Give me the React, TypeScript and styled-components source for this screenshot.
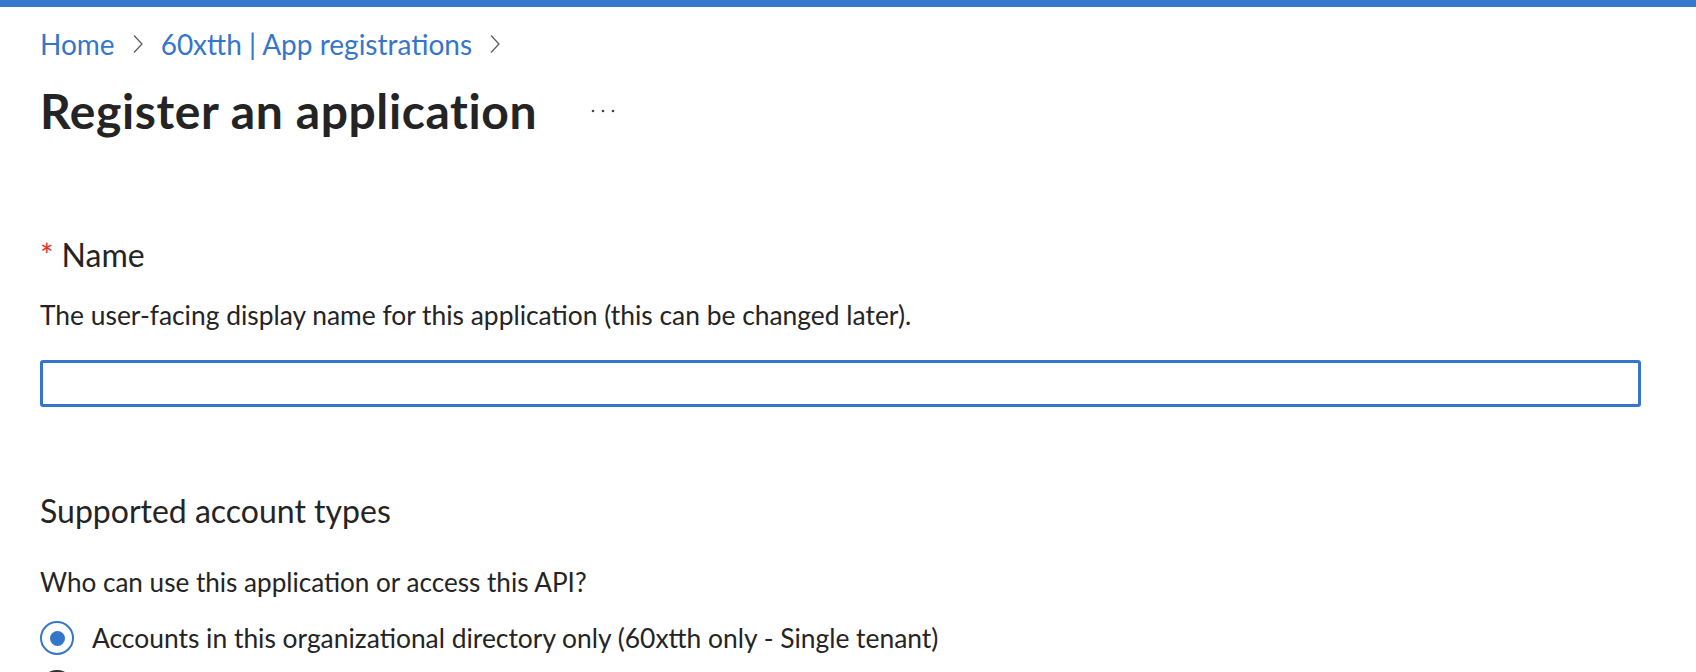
import * as React from "react"
import styled, { createGlobalStyle } from "styled-components"

const GlobalStyle = createGlobalStyle`
  html, body {
    margin: 0;
    padding: 0;
    background: #ffffff;
  }
  body {
    font-family: Lato, "Liberation Sans", sans-serif;
    color: #242424;
  }
`

const TopBar = styled.div`
  height: 7px;
  background: #3578cc;
`

const Blade = styled.div`
  padding: 19px 55px 0 40px;
`

const Crumbs = styled.nav`
  display: flex;
  align-items: center;
  gap: 18px;
  height: 36px;
  font-size: 28px;
  line-height: 36px;
`

const CrumbLink = styled.a`
  color: #3576cb;
  text-decoration: none;
`

const TitleRow = styled.div`
  display: flex;
  align-items: center;
  gap: 54px;
  margin-top: 21px;
  height: 56px;
`

const Title = styled.h1`
  margin: 0;
  font-size: 48px;
  line-height: 56px;
  font-weight: 700;
  letter-spacing: 0.6px;
  color: #242424;
`

const Section = styled.section<{ $top: number }>`
  margin-top: ${(p) => p.$top}px;
`

const FieldLabel = styled.div`
  font-size: 32px;
  line-height: 40px;
  color: #242424;
`

const Required = styled.span`
  color: #e0302a;
  margin-right: 8px;
`

const SectionHeading = styled.div`
  font-size: 32px;
  line-height: 40px;
  color: #242424;
`

const HelpText = styled.p<{ $gap: number; $size: number }>`
  margin: ${(p) => p.$gap}px 0 0;
  font-size: ${(p) => p.$size}px;
  line-height: 32px;
  color: #242424;
`

const TextInput = styled.input`
  display: block;
  box-sizing: border-box;
  width: 100%;
  height: 47px;
  margin-top: 29px;
  border: 3px solid #3576cb;
  border-radius: 3px;
  outline: none;
  padding: 0 12px;
  font: inherit;
  font-size: 26px;
`

const RadioList = styled.div`
  display: flex;
  flex-direction: column;
  gap: 13px;
  margin-top: 22px;
`

const RadioRow = styled.label`
  display: flex;
  align-items: center;
  gap: 18px;
  height: 36px;
  font-size: 26.4px;
  line-height: 32px;
  color: #242424;
`

const RadioCircle = styled.span<{ $checked: boolean }>`
  box-sizing: border-box;
  width: 34px;
  height: 34px;
  border-radius: 50%;
  border: 2px solid ${(p) => (p.$checked ? "#3576cb" : "#323130")};
  display: flex;
  align-items: center;
  justify-content: center;
  flex: none;

  &::after {
    content: "";
    width: 15px;
    height: 15px;
    border-radius: 50%;
    background: ${(p) => (p.$checked ? "#3576cb" : "transparent")};
  }
`

const Chevron = () => (
  <svg width="10" height="20" viewBox="0 0 10 20" fill="none">
    <path d="M1 1.5 L9 10 L1 18.5" stroke="#605e5c" strokeWidth="1.3" />
  </svg>
)

const Ellipsis = () => (
  <svg width="24" height="6" viewBox="0 0 24 6">
    <circle cx="2" cy="3" r="1.3" fill="#484644" />
    <circle cx="12" cy="3" r="1.3" fill="#484644" />
    <circle cx="22" cy="3" r="1.3" fill="#484644" />
  </svg>
)

const accountTypes = [
  "Accounts in this organizational directory only (60xtth only - Single tenant)",
  "Accounts in any organizational directory (Any Microsoft Entra ID tenant - Multitenant)",
]

export default function App(): React.ReactElement {
  const [choice, setChoice] = React.useState(0)
  return (
    <>
      <GlobalStyle />
      <TopBar />
      <Blade>
        <Crumbs>
          <CrumbLink href="#">Home</CrumbLink>
          <Chevron />
          <CrumbLink href="#">60xtth | App registrations</CrumbLink>
          <Chevron />
        </Crumbs>
        <TitleRow>
          <Title>Register an application</Title>
          <Ellipsis />
        </TitleRow>

        <Section $top={96}>
          <FieldLabel>
            <Required>*</Required>Name
          </FieldLabel>
          <HelpText $gap={24} $size={26.4}>
            The user-facing display name for this application (this can be changed later).
          </HelpText>
          <TextInput type="text" />
        </Section>

        <Section $top={84}>
          <SectionHeading>Supported account types</SectionHeading>
          <HelpText $gap={35} $size={26.1}>
            Who can use this application or access this API?
          </HelpText>
          <RadioList>
            {accountTypes.map((t, i) => (
              <RadioRow key={t} onClick={() => setChoice(i)}>
                <RadioCircle $checked={choice === i} />
                {t}
              </RadioRow>
            ))}
          </RadioList>
        </Section>
      </Blade>
    </>
  )
}
